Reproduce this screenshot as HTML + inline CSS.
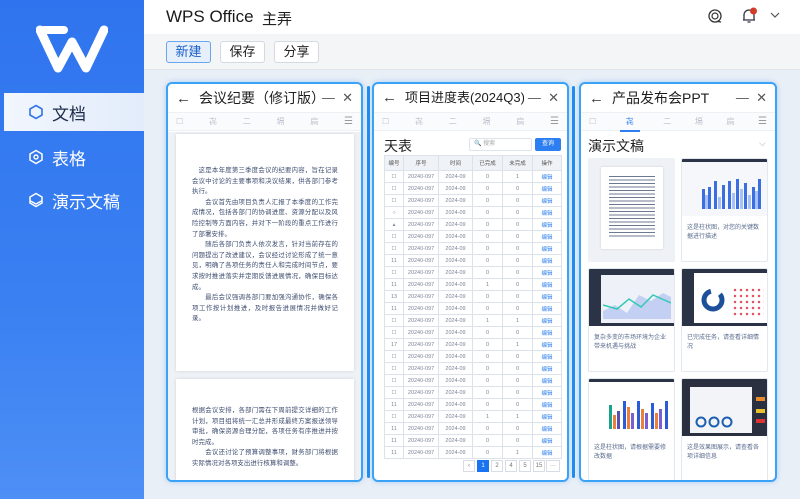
<!DOCTYPE html>
<html><head><meta charset="utf-8">
<style>
*{margin:0;padding:0;box-sizing:border-box}
body{width:800px;height:499px;overflow:hidden;font-family:"Liberation Sans","Noto Sans CJK SC",sans-serif;background:#e9eff7;position:relative}
.a{position:absolute}
#side{left:0;top:0;width:144px;height:499px;background:linear-gradient(180deg,#2f74ee 0%,#3a80f2 60%,#4d8ff5 100%)}
.nav{position:absolute;left:0;width:144px;height:38px;color:#fff;font-size:17px;display:flex;align-items:center;padding-left:28px}
.nav span{margin-left:8px}
.nav.sel{left:4px;width:140px;background:linear-gradient(90deg,#f2f6fd,#e2ecfb);color:#1b2c4a}
#top{left:144px;top:0;width:656px;height:34px;background:#fff}
#tb{left:144px;top:34px;width:656px;height:36px;background:#f4f5f7;border-bottom:1px solid #e2e6ec}
.btn{position:absolute;top:41px;height:22px;width:45px;border:1px solid #d4d9e2;border-radius:3px;background:#fff;font-size:13px;color:#222;text-align:center;line-height:20px}
.panel{position:absolute;top:82px;height:400px;background:#fff;border:2px solid #3ba2f5;border-radius:6px;overflow:hidden;box-shadow:0 0 6px rgba(60,150,240,.35)}
.ph{height:29px;position:relative;padding-left:8px;font-size:14px;line-height:28px;color:#1d1d1f;border-bottom:1px solid #eef0f3;white-space:nowrap}
.ph .ar{font-size:15px;margin-right:8px;color:#333}
.ph .ct{position:absolute;right:8px;top:0;color:#555;font-size:13px;background:#fff;padding-left:4px}
.tabs{height:18px;display:flex;justify-content:space-between;align-items:center;padding:0 8px;font-size:8px;color:#b8bfcb;border-bottom:1px solid #eef0f3;background:#fafbfc}
.sep{position:absolute;top:86px;width:3px;height:392px;background:#1f8ef0;border-radius:2px}
.pg{position:absolute;background:#fff;box-shadow:0 0 3px rgba(0,0,0,.12)}
.txt{position:absolute;font-size:6.4px;line-height:10.6px;color:#3e4d70;text-align:justify;letter-spacing:.1px}
table{border-collapse:collapse;font-size:5.5px;color:#7d8699;position:absolute}
td{border:1px solid #dde2ea;height:12px;text-align:center;padding:0}
th{border:1px solid #dde2ea;height:15px;background:#eff2f6;font-weight:normal;color:#555}
td.b{color:#2d7ef0}
.card{position:absolute;width:87px;height:104px;background:#fff;border:1px solid #e3e7ee;border-radius:2px;overflow:hidden}
.card .im{height:57px;background:#2b3446;position:relative}
.card .ct2{font-size:6px;color:#5a6c8e;padding:8px 5px;line-height:9px}
.pb{position:absolute;top:460px;width:12px;height:12px;border:1px solid #d8dde5;background:#fff;font-size:6px;color:#777;text-align:center;line-height:10px}
</style></head><body>
<div id="side" class="a">
 <svg class="a" style="left:36px;top:24px" width="72" height="50" viewBox="0 0 72 50"><path d="M4 6 L22 44 L36 18 L50 44 L68 6" fill="none" stroke="#fff" stroke-width="9" stroke-linejoin="round" stroke-linecap="round"/><path d="M8 6 H28" stroke="#fff" stroke-width="8" stroke-linecap="round"/></svg>
 <div class="nav sel" style="top:93px;padding-left:24px"><svg width="16" height="16" viewBox="0 0 16 16"><path d="M8 1.5 L14 5 V11 L8 14.5 L2 11 V5Z" fill="none" stroke="#2f74ee" stroke-width="1.6"/></svg><span>文档</span></div>
 <div class="nav" style="top:138px"><svg width="16" height="16" viewBox="0 0 16 16"><path d="M8 1.5 L14 5 V11 L8 14.5 L2 11 V5Z" fill="none" stroke="#fff" stroke-width="1.5"/><circle cx="8" cy="8" r="2" fill="none" stroke="#fff" stroke-width="1.4"/></svg><span>表格</span></div>
 <div class="nav" style="top:181px"><svg width="16" height="16" viewBox="0 0 16 16"><path d="M8 1.5 L14 5 V11 L8 14.5 L2 11 V5Z" fill="none" stroke="#fff" stroke-width="1.5"/><path d="M2.5 9 L8 12 L13.5 9" fill="none" stroke="#fff" stroke-width="1.4"/></svg><span>演示文稿</span></div>
</div>
<div id="top" class="a">
 <div class="a" style="left:22px;top:7px;font-size:17px;color:#1a1a1a">WPS Office</div>
 <div class="a" style="left:118px;top:8px;font-size:15px;color:#222">主弄</div>
 <svg class="a" style="left:563px;top:8px" width="16" height="16" viewBox="0 0 16 16"><circle cx="8" cy="8" r="6" fill="none" stroke="#333" stroke-width="1.3"/><circle cx="8" cy="8" r="3" fill="none" stroke="#333" stroke-width="1.2"/><path d="M11 13.5 L14 14" stroke="#333" stroke-width="1.2"/></svg>
 <svg class="a" style="left:596px;top:7px" width="18" height="18" viewBox="0 0 18 18"><path d="M4 13 V8 A5 5 0 0 1 14 8 V13 Z M3 13 H15 M7.5 15 H10.5" fill="none" stroke="#334" stroke-width="1.3"/><circle cx="13.5" cy="4" r="3.5" fill="#d23a2a"/></svg>
 <svg class="a" style="left:626px;top:12px" width="10" height="7" viewBox="0 0 10 7"><path d="M1 1 L5 5 L9 1" fill="none" stroke="#555" stroke-width="1.2"/></svg>
</div>
<div id="tb" class="a"></div>
<div class="btn" style="left:166px;background:#e6f0fd;border-color:#6aa6ee;color:#1a5fc8">新建</div>
<div class="btn" style="left:220px">保存</div>
<div class="btn" style="left:274px">分享</div>

<div class="sep" style="left:367px"></div>
<div class="sep" style="left:572px"></div>

<!-- panel 1 -->
<div class="panel" style="left:166px;width:197px">
 <div class="ph"><span class="ar">←</span>会议纪要（修订版）<span class="ct">—&nbsp;&nbsp;✕</span></div>
 <div class="tabs"><span>☐</span><span>㐂</span><span>二</span><span>塥</span><span>扃</span><span style="font-size:10px;color:#999">☰</span></div>
 <div style="position:absolute;left:0;top:48px;width:193px;height:350px;background:#eef1f5"></div>
 <div class="pg" style="left:8px;top:50px;width:178px;height:237px"></div>
 <div class="txt" style="left:24px;top:82px;width:146px">　这是本年度第三季度会议的纪要内容，旨在记录会议中讨论的主要事项和决议结果，供各部门参考执行。<br>　　会议首先由项目负责人汇报了本季度的工作完成情况，包括各部门的协调进度、资源分配以及风险控制等方面内容，并对下一阶段的重点工作进行了部署安排。<br>　　随后各部门负责人依次发言，针对当前存在的问题提出了改进建议，会议经过讨论形成了统一意见，明确了各项任务的责任人和完成时间节点，要求按时推进落实并定期反馈进展情况，确保目标达成。<br>　　最后会议强调各部门要加强沟通协作，确保各项工作按计划推进，及时报告进展情况并做好记录。</div>
 <div class="pg" style="left:8px;top:295px;width:178px;height:110px"></div>
 <div class="txt" style="left:24px;top:322px;width:146px">根据会议安排，各部门需在下周前提交详细的工作计划，项目组将统一汇总并形成最终方案报送领导审批，确保资源合理分配，各项任务有序推进并按时完成。<br>　　会议还讨论了预算调整事项，财务部门将根据实际情况对各项支出进行核算和调整。</div>
</div>

<!-- panel 2 -->
<div class="panel" style="left:372px;width:197px">
 <div class="ph" style="font-size:13px"><span class="ar">←</span>项目进度表(2024Q3)<span class="ct">—&nbsp;&nbsp;✕</span></div>
 <div class="tabs"><span>☐</span><span>㐂</span><span>二</span><span>塥</span><span>扃</span><span style="font-size:10px;color:#999">☰</span></div>
 <div class="a" style="left:10px;top:52px;font-size:14px;color:#222">天表</div>
 <div class="a" style="left:95px;top:54px;width:63px;height:13px;border:1px solid #dfe3ea;border-radius:2px;font-size:6px;color:#aaa;padding-left:4px;line-height:11px">🔍 搜索</div>
 <div class="a" style="left:161px;top:54px;width:26px;height:13px;background:#2d7ef0;border-radius:2px;font-size:6px;color:#fff;text-align:center;line-height:13px">查询</div>
 <table style="left:10px;top:71px;width:178px">
  <tr><th style="width:19px">编号</th><th style="width:35px">序号</th><th style="width:34px">时间</th><th style="width:30px">已完成</th><th style="width:30px">未完成</th><th>操作</th></tr>
  <tr><td>☐</td><td>20240-097</td><td>2024-09</td><td>0</td><td>1</td><td class="b">编辑</td></tr>
  <tr><td>☐</td><td>20240-097</td><td>2024-09</td><td>0</td><td>0</td><td class="b">编辑</td></tr>
  <tr><td>☐</td><td>20240-097</td><td>2024-09</td><td>0</td><td>0</td><td class="b">编辑</td></tr>
  <tr><td>○</td><td>20240-097</td><td>2024-09</td><td>0</td><td>0</td><td class="b">编辑</td></tr>
  <tr><td>▴</td><td>20240-097</td><td>2024-09</td><td>0</td><td>0</td><td class="b">编辑</td></tr>
  <tr><td>☐</td><td>20240-097</td><td>2024-09</td><td>0</td><td>0</td><td class="b">编辑</td></tr>
  <tr><td>☐</td><td>20240-097</td><td>2024-09</td><td>0</td><td>0</td><td class="b">编辑</td></tr>
  <tr><td>11</td><td>20240-097</td><td>2024-09</td><td>0</td><td>0</td><td class="b">编辑</td></tr>
  <tr><td>☐</td><td>20240-097</td><td>2024-09</td><td>0</td><td>0</td><td class="b">编辑</td></tr>
  <tr><td>11</td><td>20240-097</td><td>2024-09</td><td>1</td><td>0</td><td class="b">编辑</td></tr>
  <tr><td>13</td><td>20240-097</td><td>2024-09</td><td>0</td><td>0</td><td class="b">编辑</td></tr>
  <tr><td>11</td><td>20240-097</td><td>2024-09</td><td>0</td><td>0</td><td class="b">编辑</td></tr>
  <tr><td>☐</td><td>20240-097</td><td>2024-09</td><td>1</td><td>1</td><td class="b">编辑</td></tr>
  <tr><td>☐</td><td>20240-097</td><td>2024-09</td><td>0</td><td>0</td><td class="b">编辑</td></tr>
  <tr><td>17</td><td>20240-097</td><td>2024-09</td><td>0</td><td>1</td><td class="b">编辑</td></tr>
  <tr><td>☐</td><td>20240-097</td><td>2024-09</td><td>0</td><td>0</td><td class="b">编辑</td></tr>
  <tr><td>☐</td><td>20240-097</td><td>2024-09</td><td>0</td><td>0</td><td class="b">编辑</td></tr>
  <tr><td>☐</td><td>20240-097</td><td>2024-09</td><td>0</td><td>0</td><td class="b">编辑</td></tr>
  <tr><td>☐</td><td>20240-097</td><td>2024-09</td><td>0</td><td>0</td><td class="b">编辑</td></tr>
  <tr><td>11</td><td>20240-097</td><td>2024-09</td><td>0</td><td>0</td><td class="b">编辑</td></tr>
  <tr><td>☐</td><td>20240-097</td><td>2024-09</td><td>1</td><td>1</td><td class="b">编辑</td></tr>
  <tr><td>11</td><td>20240-097</td><td>2024-09</td><td>0</td><td>0</td><td class="b">编辑</td></tr>
  <tr><td>11</td><td>20240-097</td><td>2024-09</td><td>0</td><td>0</td><td class="b">编辑</td></tr>
  <tr><td>11</td><td>20240-097</td><td>2024-09</td><td>0</td><td>1</td><td class="b">编辑</td></tr>
 </table>
</div>
<div class="pb" style="left:463px">‹</div>
<div class="pb" style="left:477px;background:#1a73f0;border-color:#1a73f0;color:#fff">1</div>
<div class="pb" style="left:491px">2</div>
<div class="pb" style="left:505px">4</div>
<div class="pb" style="left:519px">5</div>
<div class="pb" style="left:533px">15</div>
<div class="pb" style="left:546px;width:14px">···</div>

<!-- panel 3 -->
<div class="panel" style="left:579px;width:198px">
 <div class="ph"><span class="ar">←</span>产品发布会PPT<span class="ct">—&nbsp;&nbsp;✕</span></div>
 <div class="tabs"><span>☐</span><span style="color:#2d7ef0;border-bottom:2px solid #2d7ef0;padding:4px 6px 3px">㐂</span><span>二</span><span>塥</span><span>扃</span><span style="font-size:10px;color:#999">☰</span></div>
 <div class="a" style="left:7px;top:52px;font-size:14px;color:#222">演示文稿</div>
 <div class="a" style="left:178px;top:54px;font-size:9px;color:#aaa">⌵</div>
 <div class="card" style="left:7px;top:74px;background:#eef1f5;border:none">
  <div class="a" style="left:13px;top:9px;width:62px;height:82px;background:#fff;box-shadow:0 0 2px rgba(0,0,0,.15)"></div>
  <div class="a" style="left:21px;top:18px;width:46px;height:62px;background:repeating-linear-gradient(180deg,#6d7891 0 1px,transparent 1px 3.5px)"></div>
 </div>
 <div class="card" style="left:100px;top:74px">
  <div class="im" style="background:#f5f7fa;height:57px">
   <div class="a" style="left:0;top:0;width:87px;height:3px;background:#2b3446"></div>
   <svg class="a" style="left:18px;top:16px" width="64" height="34" viewBox="0 0 64 34"><g fill="#3b6fe0"><rect x="2" y="14" width="3" height="20"/><rect x="8" y="12" width="3" height="22"/><rect x="14" y="6" width="3" height="28"/><rect x="22" y="10" width="3" height="24"/><rect x="28" y="6" width="3" height="28"/><rect x="36" y="4" width="3" height="30"/><rect x="44" y="8" width="3" height="26"/><rect x="52" y="12" width="3" height="22"/><rect x="58" y="4" width="3" height="30"/></g><g fill="#a8c2f5"><rect x="5" y="20" width="3" height="14"/><rect x="18" y="22" width="3" height="12"/><rect x="32" y="18" width="3" height="16"/><rect x="40" y="14" width="3" height="20"/><rect x="48" y="20" width="3" height="14"/><rect x="55" y="16" width="3" height="18"/></g></svg>
  </div>
  <div class="ct2">这是柱状图，对您的关键数据进行描述</div>
 </div>
 <div class="card" style="left:7px;top:184px">
  <div class="im"><div class="a" style="left:12px;top:6px;width:73px;height:48px;background:#eef2f8"></div>
   <svg class="a" style="left:14px;top:16px" width="68" height="34"><path d="M0 26 L12 20 L24 28 L36 10 L48 16 L60 8 L68 12 V34 H0Z" fill="#b9c6f2" opacity=".8"/><path d="M0 20 L14 24 L26 14 L38 22 L50 10 L68 18" fill="none" stroke="#34c9b5" stroke-width="1.5"/></svg></div>
  <div class="ct2">复杂多变的市场环境为企业带来机遇与挑战</div>
 </div>
 <div class="card" style="left:100px;top:184px">
  <div class="im"><div class="a" style="left:12px;top:4px;width:73px;height:50px;background:#fff"></div>
   <svg class="a" style="left:18px;top:18px" width="26" height="26"><circle cx="13" cy="13" r="9" fill="none" stroke="#1d4f9a" stroke-width="5" stroke-dasharray="40 10"/></svg>
   <div class="a" style="left:50px;top:18px;width:32px;height:30px;background-image:radial-gradient(#e05060 1px,transparent 1.5px);background-size:6px 6px"></div></div>
  <div class="ct2">已完成任务，请查看详细情况</div>
 </div>
 <div class="card" style="left:7px;top:294px">
  <div class="im" style="background:#fff"><div class="a" style="left:0;top:0;width:87px;height:3px;background:#2b3446"></div>
   <svg class="a" style="left:18px;top:20px" width="64" height="30"><g><rect x="2" y="6" width="3" height="24" fill="#1aa38c"/><rect x="6" y="16" width="3" height="14" fill="#e9813b"/><rect x="10" y="12" width="3" height="18" fill="#5a4fb0"/><rect x="16" y="2" width="3" height="28" fill="#2b5bd8"/><rect x="20" y="8" width="3" height="22" fill="#e9813b"/><rect x="24" y="14" width="3" height="16" fill="#7b5fd0"/><rect x="30" y="2" width="3" height="28" fill="#2b5bd8"/><rect x="34" y="10" width="3" height="20" fill="#e9813b"/><rect x="38" y="14" width="3" height="16" fill="#7b5fd0"/><rect x="44" y="4" width="3" height="26" fill="#2b5bd8"/><rect x="48" y="14" width="3" height="16" fill="#e9813b"/><rect x="52" y="10" width="3" height="20" fill="#7b5fd0"/><rect x="58" y="2" width="3" height="28" fill="#2b5bd8"/></g></svg></div>
  <div class="ct2">这是柱状图，请根据需要修改数据</div>
 </div>
 <div class="card" style="left:100px;top:294px">
  <div class="im" style="background:#2a3040"><div class="a" style="left:8px;top:8px;width:62px;height:46px;background:#f2f4f7"></div>
   <svg class="a" style="left:12px;top:36px" width="40" height="14"><g fill="none" stroke="#1d5fb0" stroke-width="2"><circle cx="7" cy="7" r="4.5"/><circle cx="20" cy="7" r="4.5"/><circle cx="33" cy="7" r="4.5"/></g></svg>
   <div class="a" style="left:74px;top:18px;width:9px;height:4px;background:#e88a2c"></div><div class="a" style="left:74px;top:30px;width:9px;height:4px;background:#e8c12c"></div><div class="a" style="left:74px;top:40px;width:9px;height:4px;background:#d33"></div></div>
  <div class="ct2">这是效果图展示，请查看各项详细信息</div>
 </div>
</div>
</body></html>
